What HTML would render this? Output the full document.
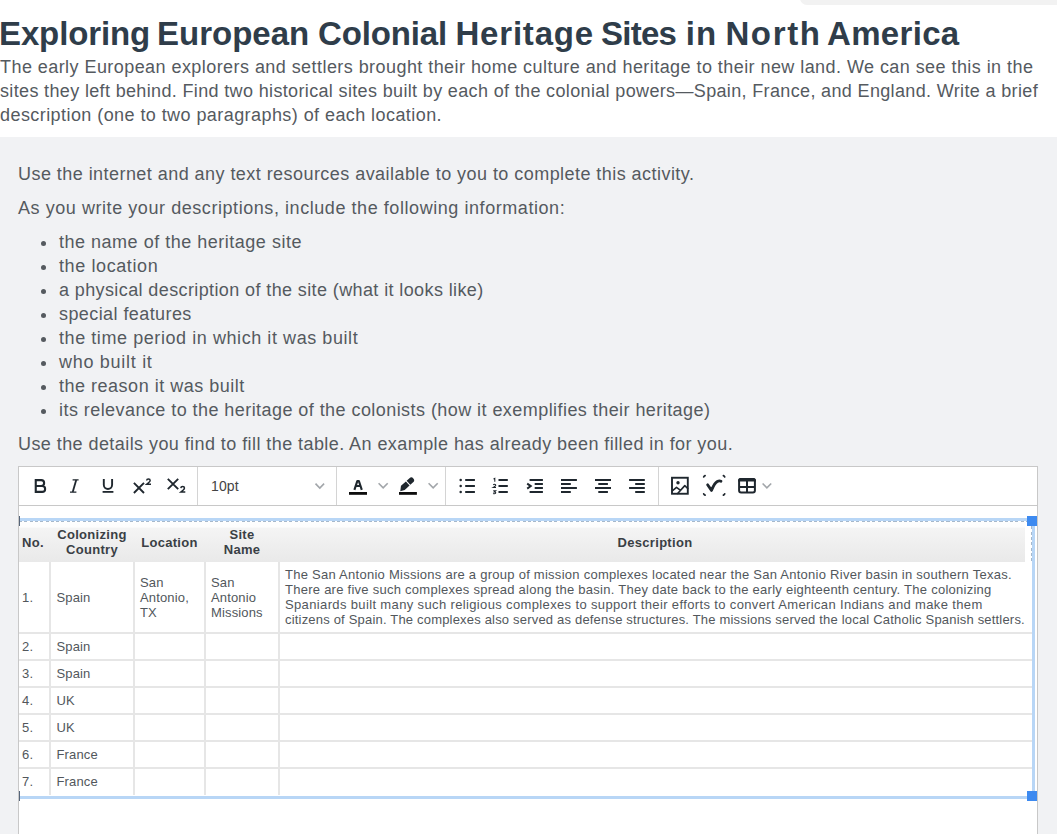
<!DOCTYPE html>
<html><head><meta charset="utf-8">
<style>
*{margin:0;padding:0;box-sizing:border-box}
html,body{width:1057px;height:834px;overflow:hidden;background:#fff;font-family:"Liberation Sans",sans-serif}
.a{position:absolute;white-space:nowrap}
#topbox{position:absolute;left:800px;top:-20px;width:300px;height:24.5px;background:#f2f2f2;border-radius:7px}
.tw{top:14px;font-size:33px;line-height:40px;font-weight:bold;color:#2f3d4a}
.p{font-size:18px;line-height:24px;color:#555a5f;letter-spacing:0.4px}
#grey{position:absolute;left:0;top:137px;width:1057px;height:697px;background:#f1f2f4}
.g{font-size:18px;line-height:24px;color:#555a5f;letter-spacing:0.42px}
.bul{position:absolute;width:5.6px;height:5.6px;margin:-0.3px 0 0 -0.3px;border-radius:50%;background:#555a5f}
#editor{position:absolute;left:18px;top:466px;width:1020px;height:400px;background:#fff;border:1px solid #c8c8c8}
.sep{position:absolute;top:467px;width:1px;height:38px;background:#d4d4d4}
.hb{position:absolute;left:19px;width:1013px;height:2px;background:#e6e6e6}
.vb{position:absolute;top:562px;width:2px;height:233px;background:#e6e6e6}
.th{position:absolute;font-size:13px;line-height:15px;font-weight:bold;letter-spacing:0.3px;color:#3a3f45;white-space:nowrap}
.c{text-align:center}
.td{position:absolute;font-size:13px;line-height:15px;color:#52575c;white-space:nowrap;letter-spacing:0.15px}
#tbline{position:absolute;left:19px;top:505px;width:1018px;height:1px;background:#c8c8c8}
</style></head><body>
<div id="topbox"></div>
<div class="a tw" style="left:-1.0px;letter-spacing:-0.12px">Exploring</div>
<div class="a tw" style="left:157.0px;letter-spacing:0.00px">European</div>
<div class="a tw" style="left:318.0px;letter-spacing:-0.14px">Colonial</div>
<div class="a tw" style="left:455.5px;letter-spacing:0.79px">Heritage</div>
<div class="a tw" style="left:601.0px;letter-spacing:-0.75px">Sites</div>
<div class="a tw" style="left:685.7px;letter-spacing:1.10px">in</div>
<div class="a tw" style="left:725.4px;letter-spacing:1.65px">North</div>
<div class="a tw" style="left:827.0px;letter-spacing:0.33px">America</div>
<div class="a p" style="left:0;top:54.5px;letter-spacing:0.44px">The early European explorers and settlers brought their home culture and heritage to their new land. We can see this in the</div>
<div class="a p" style="left:0;top:78.5px;letter-spacing:0.35px">sites they left behind. Find two historical sites built by each of the colonial powers—Spain, France, and England. Write a brief</div>
<div class="a p" style="left:0;top:102.5px;letter-spacing:0.43px">description (one to two paragraphs) of each location.</div>

<div id="grey"></div>
<div class="a g" style="left:18px;top:161.5px;letter-spacing:0.45px">Use the internet and any text resources available to you to complete this activity.</div>
<div class="a g" style="left:18px;top:195.5px;letter-spacing:0.56px">As you write your descriptions, include the following information:</div>

<div class="bul" style="left:41px;top:241px"></div>
<div class="a g" style="left:59px;top:230px;letter-spacing:0.51px">the name of the heritage site</div>
<div class="bul" style="left:41px;top:265px"></div>
<div class="a g" style="left:59px;top:254px;letter-spacing:0.6px">the location</div>
<div class="bul" style="left:41px;top:289px"></div>
<div class="a g" style="left:59px;top:278px;letter-spacing:0.39px">a physical description of the site (what it looks like)</div>
<div class="bul" style="left:41px;top:313px"></div>
<div class="a g" style="left:59px;top:302px;letter-spacing:0.42px">special features</div>
<div class="bul" style="left:41px;top:337px"></div>
<div class="a g" style="left:59px;top:326px;letter-spacing:0.57px">the time period in which it was built</div>
<div class="bul" style="left:41px;top:361px"></div>
<div class="a g" style="left:59px;top:350px;letter-spacing:0.71px">who built it</div>
<div class="bul" style="left:41px;top:385px"></div>
<div class="a g" style="left:59px;top:374px;letter-spacing:0.51px">the reason it was built</div>
<div class="bul" style="left:41px;top:409px"></div>
<div class="a g" style="left:59px;top:398px;letter-spacing:0.44px">its relevance to the heritage of the colonists (how it exemplifies their heritage)</div>
<div class="a g" style="left:18px;top:432px;letter-spacing:0.43px">Use the details you find to fill the table. An example has already been filled in for you.</div>

<div id="editor"></div>
<div id="tbline"></div>
<div class="sep" style="left:197px"></div>
<div class="sep" style="left:336px"></div>
<div class="sep" style="left:445px"></div>
<div class="sep" style="left:658px"></div>
<div class="a" style="left:211px;top:477px;font-size:14px;line-height:18px;color:#444;letter-spacing:0.1px">10pt</div>
<svg style="position:absolute;left:0;top:0" width="1057" height="834" viewBox="0 0 1057 834">
 <g fill="none" stroke="#1f272e" stroke-linecap="butt">
  <!-- B -->
  <path d="M35.75,479.1 V492.9 M35.75,480.15 H41.2 A2.925,2.925 0 0 1 41.2,486 H35.75 M35.75,486 H42.2 A2.925,2.925 0 0 1 42.2,491.85 H35.75" stroke-width="2.1"/>
  <!-- I -->
  <path d="M72.6,479.9 H78.6 M70,492.1 H76.4" stroke-width="1.3"/>
  <path d="M76.2,480 L72.7,492" stroke-width="1.8"/>
  <!-- U -->
  <path d="M103.8,479.1 V484.8 A4.15,4.15 0 0 0 112.1,484.8 V479.1" stroke-width="1.9"/>
  <path d="M102.6,491.9 H113.4" stroke-width="1.8"/>
  <!-- x2 sup -->
  <path d="M133.9,482.9 L144,493 M144,482.9 L133.9,493" stroke-width="1.9"/>
  <path transform="translate(145.9,478.3) scale(0.98,0.95)" d="M0.75,2.3 C0.8,1.1 1.7,0.75 2.6,0.75 C3.6,0.75 4.35,1.3 4.35,2.25 C4.35,3.2 3.7,3.8 2.9,4.45 L0.75,6.25 H5.2" stroke-width="1.5"/>
  <!-- x2 sub -->
  <path d="M167.8,478.9 L178.2,489.1 M178.2,478.9 L167.8,489.1" stroke-width="1.9"/>
  <path transform="translate(180.1,485.8)" d="M0.75,2.3 C0.8,1.1 1.7,0.75 2.6,0.75 C3.6,0.75 4.35,1.3 4.35,2.25 C4.35,3.2 3.7,3.8 2.9,4.45 L0.75,6.25 H5.2" stroke-width="1.5"/>
  <!-- chevrons -->
  <g stroke="#a2a6aa" stroke-width="1.6">
   <path d="M315.5,483.6 L319.8,488 L324.1,483.6"/>
   <path d="M378.6,483.2 L383.15,487.8 L387.7,483.2"/>
   <path d="M428.6,483.2 L433.15,487.8 L437.7,483.2"/>
   <path d="M762.6,483.5 L766.9,487.9 L771.2,483.5"/>
  </g>
  <!-- A -->
  <path d="M354.4,489.8 L357.3,481.1 H358.9 L361.8,489.8 M355.6,486 H360.6" stroke-width="2.1" stroke-linejoin="round"/>
  <!-- lists -->
  <path d="M465.2,480 H474.9 M465.2,486 H474.9 M465.2,492 H474.9 M498.5,480 H507.8 M498.5,486 H507.8 M498.5,492 H507.8" stroke-width="1.8"/>
  <path d="M493.5,478.9 L494.8,478.3 V481.8 M493.3,484.9 Q493.6,484.3 494.6,484.3 Q495.8,484.3 495.8,485.3 Q495.8,486 493.3,487.4 H496 M493.2,490.7 H495.7 L494.3,491.9 Q495.8,491.9 495.8,492.8 Q495.8,493.7 494.4,493.7 Q493.6,493.7 493.2,493.3" stroke-width="1.05"/>
  <!-- indent -->
  <path d="M529.6,480 H542.9 M534.7,484 H542.9 M534.7,488 H542.9 M529.6,492 H542.9" stroke-width="1.8"/>
  <path d="M527.2,483.6 L530.8,486.1 L527.2,488.6" stroke-width="1.9"/>
  <!-- align -->
  <path d="M561,480 H576.9 M561,484 H570.8 M561,488 H576.9 M561,492 H570.8" stroke-width="1.8"/>
  <path d="M595,480 H611 M598.3,484 H607.9 M595,488 H611 M598.3,492 H607.9" stroke-width="1.8"/>
  <path d="M629.1,480 H644.8 M635.2,484 H644.8 M629.1,488 H644.8 M635.2,492 H644.8" stroke-width="1.8"/>
  <!-- image -->
  <rect x="672" y="477.75" width="15.8" height="16" stroke-width="1.9"/>
  <path d="M672.3,490.8 L676.5,487.3 L680.2,490.2 M677.2,494 L684.8,485.6 L688.2,489" stroke-width="1.6" stroke-linejoin="round"/>
  <!-- spellcheck -->
  <path d="M707.6,484.8 L711.5,490.4 C712.8,487.2 714.3,483 717.3,481.4 C718.7,480.7 720.2,480.8 721,481.2" stroke-width="2.8" stroke-linecap="round" stroke-linejoin="round"/>
  <path d="M703.7,476.9 Q704.1,476 705.1,475.6 M723.4,475.6 Q724.3,476 724.7,476.9 M703.7,493.8 Q704.1,494.7 705.1,495.1 M723.4,495.1 Q724.3,494.7 724.7,493.8" stroke-width="1.7" stroke-linecap="round"/>
  <!-- table -->
  <rect x="739.1" y="479.1" width="15.8" height="13.4" rx="2" stroke-width="2"/>
  <path d="M747,481 V492.5 M739.1,487 H754.9" stroke-width="2"/>
 </g>
 <g fill="#1f272e">
  <circle cx="460.7" cy="480" r="1.25"/>
  <circle cx="460.7" cy="486" r="1.25"/>
  <circle cx="460.7" cy="492" r="1.25"/>
  <circle cx="678" cy="482.8" r="1.7"/>
  <path d="M738.1,481.6 V480.6 Q738.1,478.1 740.6,478.1 H753.4 Q755.9,478.1 755.9,480.6 V481.6 Z"/>
  <g transform="translate(400.6,489.9) rotate(-42)">
   <path d="M-1.2,0.8 L3,-2.75 H9.6 V2.75 H3 Z"/>
   <path d="M10.6,-2.75 H14.4 A2.75,2.75 0 0 1 14.4,2.75 H10.6 Z"/>
  </g>
 </g>
 <g fill="#0d0d0d">
  <rect x="349" y="492" width="18" height="2.8"/>
  <rect x="399" y="492" width="17.9" height="2.8"/>
 </g>
</svg>
<!-- table -->
<div style="position:absolute;left:19px;top:522px;width:1006px;height:39.5px;background:linear-gradient(#fefefe 0,#fcfcfc 5px,#f4f4f4 6.5px,#e9e9e9 100%)"></div>
<!-- row borders -->
<div class="hb" style="top:632px"></div>
<div class="hb" style="top:659px"></div>
<div class="hb" style="top:686px"></div>
<div class="hb" style="top:713px"></div>
<div class="hb" style="top:740px"></div>
<div class="hb" style="top:767px"></div>
<div class="vb" style="left:49px"></div>
<div class="vb" style="left:133px"></div>
<div class="vb" style="left:204px"></div>
<div class="vb" style="left:278px"></div>
<!-- header text -->
<div class="th" style="left:22px;top:535px;">No.</div>
<div class="th c" style="left:50px;width:84px;top:527px">Colonizing<br>Country</div>
<div class="th c" style="left:134px;width:71px;top:535px">Location</div>
<div class="th c" style="left:205px;width:74px;top:527px">Site<br>Name</div>
<div class="th c" style="left:279px;width:752px;top:535px">Description</div>
<!-- row 1 -->
<div class="td" style="left:22px;top:590px">1.</div>
<div class="td" style="left:56.5px;top:590px">Spain</div>
<div class="td" style="left:140px;top:575px">San<br>Antonio,<br>TX</div>
<div class="td" style="left:211px;top:575px">San<br>Antonio<br>Missions</div>
<div class="td" style="left:285px;top:567px;letter-spacing:0.26px">The San Antonio Missions are a group of mission complexes located near the San Antonio River basin in southern Texas.</div>
<div class="td" style="left:285px;top:582px;letter-spacing:0.26px">There are five such complexes spread along the basin. They date back to the early eighteenth century. The colonizing</div>
<div class="td" style="left:285px;top:597px;letter-spacing:0.36px">Spaniards built many such religious complexes to support their efforts to convert American Indians and make them</div>
<div class="td" style="left:285px;top:612px;letter-spacing:0.19px">citizens of Spain. The complexes also served as defense structures. The missions served the local Catholic Spanish settlers.</div>
<div class="td" style="left:22px;top:639px">2.</div><div class="td" style="left:56.5px;top:639px">Spain</div>
<div class="td" style="left:22px;top:666px">3.</div><div class="td" style="left:56.5px;top:666px">Spain</div>
<div class="td" style="left:22px;top:693px">4.</div><div class="td" style="left:56.5px;top:693px">UK</div>
<div class="td" style="left:22px;top:720px">5.</div><div class="td" style="left:56.5px;top:720px">UK</div>
<div class="td" style="left:22px;top:747px">6.</div><div class="td" style="left:56.5px;top:747px">France</div>
<div class="td" style="left:22px;top:774px">7.</div><div class="td" style="left:56.5px;top:774px">France</div>
<!-- selection outline -->
<div style="position:absolute;left:19px;top:518px;width:1016px;height:3px;background:#b8d6f6"></div>
<div style="position:absolute;left:19px;top:521px;width:1012px;height:1px;background:repeating-linear-gradient(90deg,#a6b8cb 0 3px,transparent 3px 5.3px)"></div>
<div style="position:absolute;left:1031px;top:521px;width:1px;height:40px;background:repeating-linear-gradient(180deg,#a6b8cb 0 3px,transparent 3px 5.3px)"></div>
<div style="position:absolute;left:1032px;top:518px;width:3px;height:281px;background:#b8d6f6"></div>
<div style="position:absolute;left:19px;top:795.5px;width:1016px;height:3px;background:#b8d6f6"></div>
<div style="position:absolute;left:1027px;top:516px;width:10px;height:10px;background:#3d8af0"></div>
<div style="position:absolute;left:1027px;top:791px;width:10px;height:10px;background:#3d8af0"></div>
<div style="position:absolute;left:19px;top:516px;width:1px;height:10px;background:#56657a"></div>
<div style="position:absolute;left:19px;top:791px;width:1px;height:10px;background:#56657a"></div>

</body></html>
